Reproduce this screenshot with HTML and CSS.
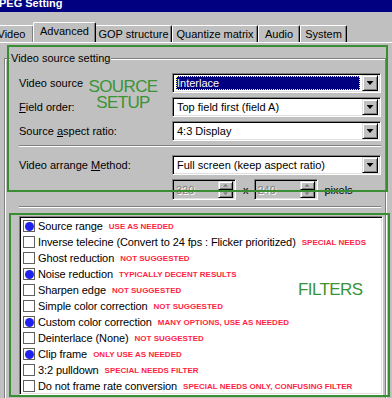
FILE: index.html
```html
<!DOCTYPE html>
<html lang="en">

<head>
    <meta charset="UTF-8">
    <meta name="viewport" content="width=device-width, initial-scale=1.0">
    <title>MPEG Setting</title>
    <link rel="stylesheet" href="styles.css">
</head>

<body>
    <div class="window">
        <!-- title bar -->
        <div class="titlebar">
            <span class="title">PEG Setting</span>
        </div>

        <!-- tabs -->
        <div class="tabs">
            <div class="tab tab-video">Video</div>
            <div class="tab tab-advanced active">Advanced</div>
            <div class="tab tab-gop">GOP structure</div>
            <div class="tab tab-quant">Quantize matrix</div>
            <div class="tab tab-audio">Audio</div>
            <div class="tab tab-system">System</div>
        </div>

        <div class="panel">
            <div class="group">
                <span class="group-title">Video source setting</span>

                <div class="row">
                    <label>Video source</label>
                    <div class="combo">
                        <span class="combo-text selected">Interlace</span>
                        <span class="drop"></span>
                    </div>
                </div>
                <div class="row">
                    <label><u>F</u>ield order:</label>
                    <div class="combo">
                        <span class="combo-text">Top field first (field A)</span>
                        <span class="drop"></span>
                    </div>
                </div>
                <div class="row">
                    <label>Source <u>a</u>spect ratio:</label>
                    <div class="combo">
                        <span class="combo-text">4:3 Display</span>
                        <span class="drop"></span>
                    </div>
                </div>

                <div class="separator sep-top"></div>

                <div class="row">
                    <label>Video arrange <u>M</u>ethod:</label>
                    <div class="combo">
                        <span class="combo-text">Full screen (keep aspect ratio)</span>
                        <span class="drop"></span>
                    </div>
                </div>

                <div class="spin-row">
                    <div class="spin">
                        <span class="spin-text">320</span>
                        <div class="spin-btns">
                            <span class="spin-btn up"></span>
                            <span class="spin-btn down"></span>
                        </div>
                    </div>
                    <span class="times">x</span>
                    <div class="spin">
                        <span class="spin-text">240</span>
                        <div class="spin-btns">
                            <span class="spin-btn up"></span>
                            <span class="spin-btn down"></span>
                        </div>
                    </div>
                    <span class="unit">pixels</span>
                </div>

                <div class="separator sep-bottom"></div>

                <!-- filter list -->
                <div class="listbox">
                    <div class="item"><span class="check on"></span>Source range<span class="note">USE AS NEEDED</span></div>
                    <div class="item"><span class="check"></span>Inverse telecine (Convert to 24 fps : Flicker prioritized)<span class="note">SPECIAL NEEDS</span></div>
                    <div class="item"><span class="check"></span>Ghost reduction<span class="note">NOT SUGGESTED</span></div>
                    <div class="item"><span class="check on"></span>Noise reduction<span class="note">TYPICALLY DECENT RESULTS</span></div>
                    <div class="item"><span class="check"></span>Sharpen edge<span class="note">NOT SUGGESTED</span></div>
                    <div class="item"><span class="check"></span>Simple color correction<span class="note">NOT SUGGESTED</span></div>
                    <div class="item"><span class="check on"></span>Custom color correction<span class="note">MANY OPTIONS, USE AS NEEDED</span></div>
                    <div class="item"><span class="check"></span>Deinterlace (None)<span class="note">NOT SUGGESTED</span></div>
                    <div class="item"><span class="check on"></span>Clip frame<span class="note">ONLY USE AS NEEDED</span></div>
                    <div class="item"><span class="check"></span>3:2 pulldown<span class="note">SPECIAL NEEDS FILTER</span></div>
                    <div class="item"><span class="check"></span>Do not frame rate conversion<span class="note">SPECIAL NEEDS ONLY, CONFUSING FILTER</span></div>
                </div>
            </div>
        </div>

        <!-- green hand-drawn annotations -->
        <div class="mark mark-source"></div>
        <div class="mark-label label-source">SOURCE<br>SETUP</div>
        <div class="mark mark-filters"></div>
        <div class="mark-label label-filters">FILTERS</div>
    </div>
</body>

</html>
```

FILE: styles.css
```css
body {
    margin: 0;
    padding: 0;
    background-color: #c0c0c0;
    font-family: "Liberation Sans", Arial, sans-serif;
    font-size: 11px;
    color: #000;
}

.window {
    position: relative;
    width: 392px;
    height: 398px;
    overflow: hidden;
}

/* title bar */
.titlebar {
    height: 12px;
    background-color: #000080;
    overflow: hidden;
}

.title {
    display: block;
    margin-top: -3px;
    margin-left: -1px;
    line-height: 13px;
    color: #fff;
    font-weight: bold;
    font-size: 11px;
}

/* tabs */
.tabs {
    display: flex;
    align-items: flex-end;
    height: 20px;
    margin-top: 10px;
    margin-left: -13px;
}

.tab {
    height: 17px;
    line-height: 16px;
    text-align: center;
    box-sizing: border-box;
    border-top: 1px solid #fff;
    border-left: 1px solid #fff;
    border-right: 1px solid #000;
    border-radius: 2px 2px 0 0;
    box-shadow: inset -1px 0 #808080;
    white-space: nowrap;
}

.tab-video { width: 47px; padding-left: 2px; }
.tab-advanced { width: 63px; }
.tab-gop { width: 77px; }
.tab-quant { width: 86px; }
.tab-audio { width: 42px; }
.tab-system { width: 47px; }

.tab.active {
    height: 20px;
    margin: 0 -1px 0 -1px;
    position: relative;
    z-index: 1;
    background-color: #c0c0c0;
    line-height: 17px;
}

.panel {
    border-top: 1px solid #fff;
    padding-top: 15px;
}

/* group box */
.group {
    margin-left: 4px;
    width: 382px;
    height: 400px;
    box-sizing: border-box;
    border: 1px solid #808080;
    box-shadow: inset 1px 1px #fff, 1px 1px #fff;
    padding: 0 1px 0 14px;
}

.group-title {
    display: block;
    width: fit-content;
    margin: -7px 0 8px -9px;
    padding: 0 1px;
    line-height: 13px;
    background-color: #c0c0c0;
}

.row {
    display: flex;
    align-items: center;
    height: 20px;
    margin-bottom: 4px;
}

.row label {
    width: 153px;
}

/* combo box */
.combo {
    display: flex;
    align-items: center;
    width: 209px;
    height: 20px;
    box-sizing: border-box;
    background-color: #fff;
    border: 1px solid;
    border-color: #808080 #fff #fff #808080;
    box-shadow: inset 1px 1px #000, inset -1px -1px #dfdfdf;
    padding: 2px 2px 2px 3px;
}

.combo-text {
    flex: 1;
    height: 14px;
    line-height: 14px;
    padding-left: 1px;
    white-space: nowrap;
    overflow: hidden;
}

.combo-text.selected {
    background-color: #000080;
    color: #fff;
    outline: 1px dotted #ffff80;
    outline-offset: -1px;
    margin-right: 2px;
}

.drop {
    width: 16px;
    height: 16px;
    box-sizing: border-box;
    background-color: #c0c0c0;
    border: 1px solid;
    border-color: #dfdfdf #000 #000 #dfdfdf;
    box-shadow: inset 1px 1px #fff, inset -1px -1px #808080;
    display: flex;
    align-items: center;
    justify-content: center;
}

.drop::after {
    content: "";
    width: 7px;
    height: 4px;
    background-color: #000;
    clip-path: polygon(0 0, 100% 0, 50% 100%);
}

.separator {
    width: 362px;
    border-top: 1px solid #808080;
    border-bottom: 1px solid #fff;
}

.sep-top {
    margin: 3px 0 8px 0;
}

.sep-bottom {
    margin: 6px 0 8px 0;
}

/* spin boxes */
.spin-row {
    display: flex;
    align-items: center;
    height: 21px;
    margin-left: 153px;
}

.spin {
    display: flex;
    align-items: center;
    width: 64px;
    height: 21px;
    box-sizing: border-box;
    border: 1px solid;
    border-color: #808080 #fff #fff #808080;
    box-shadow: inset 1px 1px #000, inset -1px -1px #dfdfdf;
    padding: 2px;
}

.spin-text {
    flex: 1;
    padding-left: 1px;
    color: #808080;
    text-shadow: 1px 1px #fff;
}

.spin-btns {
    display: flex;
    flex-direction: column;
    width: 15px;
    height: 17px;
}

.spin-btn {
    flex: 1;
    box-sizing: border-box;
    border: 1px solid;
    border-color: #dfdfdf #000 #000 #dfdfdf;
    box-shadow: inset 1px 1px #fff, inset -1px -1px #808080;
    display: flex;
    align-items: center;
    justify-content: center;
}

.spin-btn::after {
    content: "";
    width: 5px;
    height: 3px;
    background-color: #808080;
}

.spin-btn.up::after {
    clip-path: polygon(50% 0, 100% 100%, 0 100%);
}

.spin-btn.down::after {
    clip-path: polygon(0 0, 100% 0, 50% 100%);
}

.times {
    margin: 0 5px 0 7px;
}

.unit {
    margin-left: 7px;
}

/* filter list */
.listbox {
    width: 364px;
    height: 179px;
    box-sizing: border-box;
    background-color: #fff;
    border: 1px solid;
    border-color: #808080 #fff #fff #808080;
    box-shadow: inset 1px 1px #000, inset -1px -1px #dfdfdf;
    padding: 1px 0 0 3px;
    overflow: hidden;
}

.item {
    display: flex;
    align-items: center;
    height: 16px;
    white-space: nowrap;
    letter-spacing: -0.1px;
}

.check {
    width: 12px;
    height: 12px;
    box-sizing: border-box;
    border: 1px solid #606060;
    margin-right: 3px;
    background-color: #fff;
    display: flex;
    align-items: center;
    justify-content: center;
}

.check.on::after {
    content: "";
    width: 9px;
    height: 9px;
    border-radius: 50%;
    background-color: #2020f0;
}

.note {
    margin-left: 6px;
    color: #ff1f45;
    font-weight: bold;
    font-size: 8px;
    letter-spacing: 0;
}

/* annotations drawn over the dialog */
.mark {
    position: absolute;
    border: 2px solid #3b8d34;
    box-sizing: border-box;
}

.mark-source {
    left: 7px;
    top: 45px;
    width: 381px;
    height: 147px;
}

.mark-filters {
    left: 9px;
    top: 213px;
    width: 381px;
    height: 184px;
}

.mark-label {
    position: absolute;
    color: #3a9336;
    font-size: 17px;
    line-height: 16px;
    text-align: center;
    letter-spacing: -0.6px;
}

.label-source {
    left: 88px;
    top: 79px;
    width: 70px;
}

.label-filters {
    left: 298px;
    top: 282px;
}
```
